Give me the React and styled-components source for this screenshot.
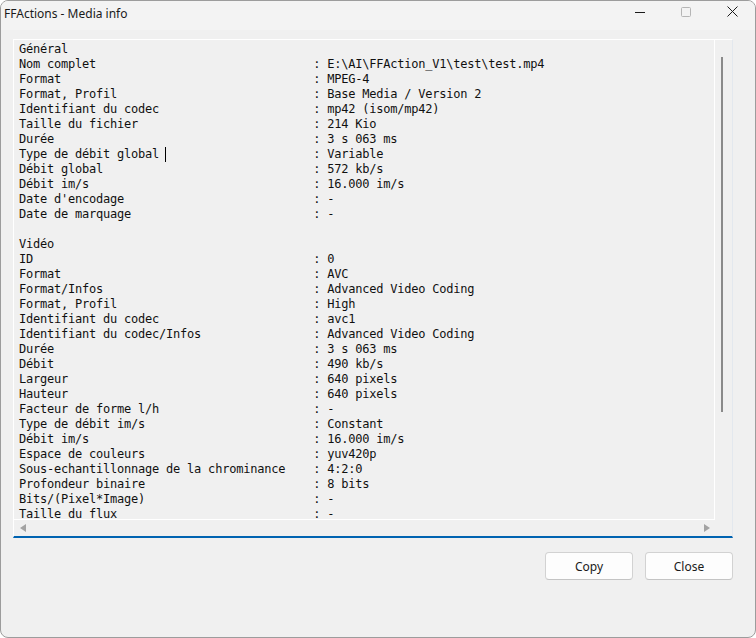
import React from 'react';
import styled, { createGlobalStyle } from 'styled-components';

// Global page reset

const GlobalStyle = createGlobalStyle`
    html, body {
        margin: 0;
        padding: 0;
        background: #ffffff;
    }
    * {
        box-sizing: border-box;
    }
`;

const Window = styled.div`
    width: 756px;
    height: 638px;
    display: flex;
    flex-direction: column;
    background-color: #f0f0f0;
    border: 1px solid #9c9c9c;
    border-radius: 8px;
    overflow: hidden;
    font-family: "Noto Sans", "Open Sans", sans-serif;
`;

const TitleBar = styled.div`
    height: 29px;
    display: flex;
    align-items: center;
    justify-content: space-between;
    background-color: #f3f3f3;
    padding-left: 3px;
`;

const Title = styled.span`
    font-size: 12px;
    color: #1a1a1a;
    line-height: 1;
    margin-top: -3px;
`;

const Controls = styled.div`
    display: flex;
    height: 100%;
`;

const ControlButton = styled.div`
    width: 46px;
    height: 100%;
    display: flex;
    align-items: center;
    justify-content: center;
    margin-top: -4px;
`;

const Body = styled.div`
    flex: 1;
    display: flex;
    flex-direction: column;
    padding: 9px 22px 0 12px;
`;

const TextBox = styled.div`
    width: 720px;
    height: 499px;
    display: grid;
    grid-template-columns: minmax(0, 1fr) 17px;
    grid-template-rows: minmax(0, 1fr) 16px;
    border-top: 1px solid #ffffff;
    border-left: 1px solid #ffffff;
    border-right: 1px solid #e3e8ee;
    border-bottom: 2px solid #0063b1;
`;

const Content = styled.div`
    grid-column: 1;
    grid-row: 1;
    min-width: 0;
    overflow: hidden;
    border-right: 1px solid #ffffff;
    border-bottom: 1px solid #ffffff;
    padding: 2px 0 0 5px;
`;

const Line = styled.div`
    height: 15px;
    line-height: 15px;
    white-space: pre;
    font-family: "DejaVu Sans Mono", "Liberation Mono", monospace;
    font-size: 12px;
    letter-spacing: -0.22px;
    color: #101010;
`;

const Caret = styled.span`
    display: inline-block;
    width: 1px;
    height: 15px;
    background: #000000;
    vertical-align: top;
    margin-left: -1px;
`;

const VScroll = styled.div`
    position: relative;
    grid-column: 2;
    grid-row: 1 / 3;
`;

const VThumb = styled.div`
    position: absolute;
    left: 6px;
    top: 17px;
    width: 2px;
    height: 355px;
    background: #8a8a8a;
`;

const HScroll = styled.div`
    grid-column: 1;
    grid-row: 2;
    display: flex;
    align-items: center;
    justify-content: space-between;
    padding: 0 5px 0 6px;
`;

const Arrow = styled.div`
    width: 0;
    height: 0;
    border-top: 4px solid transparent;
    border-bottom: 4px solid transparent;
    ${(p) => (p.$left ? 'border-right: 6px solid #a3a3a3;' : 'border-left: 6px solid #a3a3a3;')}
`;

const Footer = styled.div`
    display: flex;
    justify-content: flex-end;
    gap: 12px;
    padding-top: 14px;
    width: 720px;
`;

const Button = styled.button`
    width: 88px;
    height: 28px;
    background: #fdfdfd;
    border: 1px solid #d2d2d2;
    border-bottom-color: #c4c4c4;
    border-radius: 4px;
    font-family: "Noto Sans", "Open Sans", sans-serif;
    font-size: 12px;
    color: #1a1a1a;
    padding: 0;
`;

const general = [
    ['Nom complet', 'E:\\AI\\FFAction_V1\\test\\test.mp4'],
    ['Format', 'MPEG-4'],
    ['Format, Profil', 'Base Media / Version 2'],
    ['Identifiant du codec', 'mp42 (isom/mp42)'],
    ['Taille du fichier', '214 Kio'],
    ['Durée', '3 s 063 ms'],
    ['Type de débit global', 'Variable'],
    ['Débit global', '572 kb/s'],
    ['Débit im/s', '16.000 im/s'],
    ["Date d'encodage", '-'],
    ['Date de marquage', '-'],
];

const video = [
    ['ID', '0'],
    ['Format', 'AVC'],
    ['Format/Infos', 'Advanced Video Coding'],
    ['Format, Profil', 'High'],
    ['Identifiant du codec', 'avc1'],
    ['Identifiant du codec/Infos', 'Advanced Video Coding'],
    ['Durée', '3 s 063 ms'],
    ['Débit', '490 kb/s'],
    ['Largeur', '640 pixels'],
    ['Hauteur', '640 pixels'],
    ['Facteur de forme l/h', '-'],
    ['Type de débit im/s', 'Constant'],
    ['Débit im/s', '16.000 im/s'],
    ['Espace de couleurs', 'yuv420p'],
    ['Sous-echantillonnage de la chrominance', '4:2:0'],
    ['Profondeur binaire', '8 bits'],
    ['Bits/(Pixel*Image)', '-'],
    ['Taille du flux', '-'],
];

// Одна строка "ключ : значение" с выравниванием двоеточия

function InfoLine({ label, value, caret }) {
    if (caret) {
        return (
            <Line>
                {label + ' '}<Caret />{' '.repeat(42 - label.length - 1)}: {value}
            </Line>
        );
    }
    return <Line>{label.padEnd(42, ' ')}: {value}</Line>;
}

export default function App() {
    return (
        <>
            <GlobalStyle />
            <Window>
                <TitleBar>
                    <Title>FFActions - Media info</Title>
                    <Controls>
                        <ControlButton>
                            <svg width="10" height="10" viewBox="0 0 10 10">
                                <line x1="0" y1="5.5" x2="10" y2="5.5" stroke="#1a1a1a" strokeWidth="1" />
                            </svg>
                        </ControlButton>
                        <ControlButton>
                            <svg width="10" height="10" viewBox="0 0 10 10">
                                <rect x="0.5" y="0.5" width="9" height="9" rx="1" fill="none" stroke="#b5b5b5" strokeWidth="1" />
                            </svg>
                        </ControlButton>
                        <ControlButton>
                            <svg width="11" height="11" viewBox="0 0 11 11">
                                <path d="M0.5 0.5 L10.5 10.5 M10.5 0.5 L0.5 10.5" stroke="#1a1a1a" strokeWidth="1" />
                            </svg>
                        </ControlButton>
                    </Controls>
                </TitleBar>
                <Body>
                    <TextBox>
                        <Content>
                            <Line>Général</Line>
                            {general.map(([l, v]) => (
                                <InfoLine key={'g' + l} label={l} value={v} caret={l === 'Type de débit global'} />
                            ))}
                            <Line> </Line>
                            <Line>Vidéo</Line>
                            {video.map(([l, v]) => (
                                <InfoLine key={'v' + l} label={l} value={v} />
                            ))}
                        </Content>
                        <VScroll>
                            <VThumb />
                        </VScroll>
                        <HScroll>
                            <Arrow $left />
                            <Arrow />
                        </HScroll>
                    </TextBox>
                    <Footer>
                        <Button>Copy</Button>
                        <Button>Close</Button>
                    </Footer>
                </Body>
            </Window>
        </>
    );
}
